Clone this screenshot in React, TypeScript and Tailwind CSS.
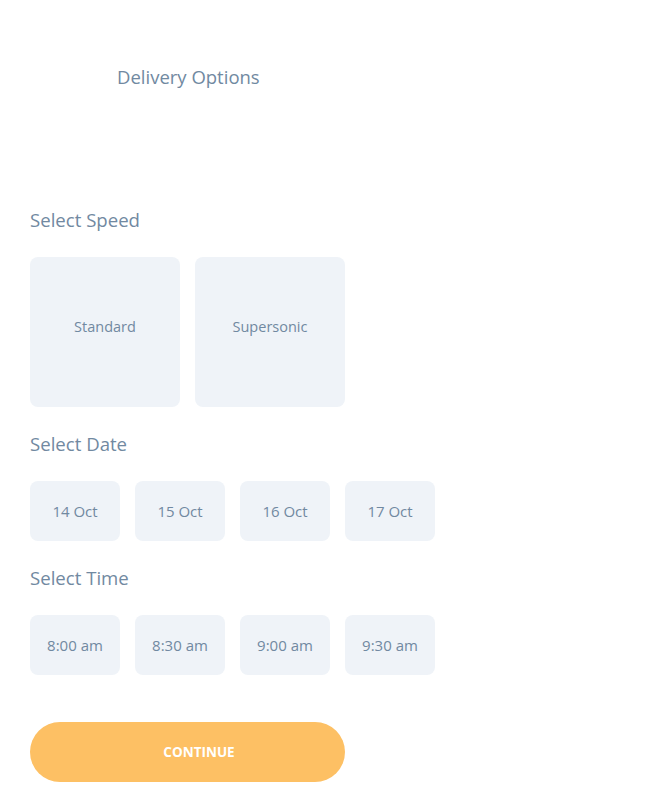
import React from "react";

const font = { fontFamily: '"Open Sans", "Noto Sans", sans-serif' };

function Box({ label, big }: { label: string; big?: boolean }) {
  return (
    <div
      className={`${big ? "w-[150px] h-[150px] pb-[10px] text-[14.5px]" : "w-[90px] h-[60px] text-[15px]"} flex items-center justify-center rounded-[8px] bg-[#eff3f8] text-[#7189a1]`}
    >
      {label}
    </div>
  );
}

export default function App() {
  return (
    <div className="min-h-[812px] w-[658px] bg-white px-[30px] pt-[65px]" style={font}>
      <div className="pl-[87px] text-[18.5px] leading-[24px] text-[#7189a1]">Delivery Options</div>

      <div className="mt-[119px] text-[18.6px] leading-[24px] text-[#7189a1]">Select Speed</div>
      <div className="mt-[25px] flex gap-[15px]">
        <Box label="Standard" big />
        <Box label="Supersonic" big />
      </div>

      <div className="mt-[25px] text-[18.6px] leading-[24px] text-[#7189a1]">Select Date</div>
      <div className="mt-[25px] flex gap-[15px]">
        {["14 Oct", "15 Oct", "16 Oct", "17 Oct"].map((d) => (
          <Box key={d} label={d} />
        ))}
      </div>

      <div className="mt-[25px] text-[18.6px] leading-[24px] text-[#7189a1]">Select Time</div>
      <div className="mt-[25px] flex gap-[15px]">
        {["8:00 am", "8:30 am", "9:00 am", "9:30 am"].map((d) => (
          <Box key={d} label={d} />
        ))}
      </div>

      <button className="mt-[47px] flex h-[60px] w-[315px] items-center justify-center rounded-full bg-[#fdc064] pl-[23px] text-[13.5px] font-bold text-white">
        CONTINUE
      </button>
    </div>
  );
}
